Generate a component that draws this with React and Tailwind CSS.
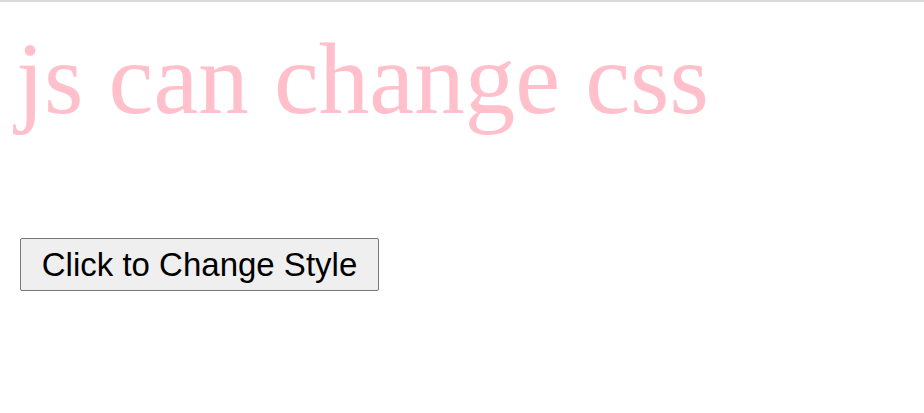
export default function App() {
  return (
    <div className="min-h-[413px] w-full bg-white">
      <div className="h-[2px] w-full bg-[#dadada]" />
      <div className="pl-[16px] pt-[20px]">
        <h1
          className="text-[101px] leading-[115px] text-[#ffc0cb] whitespace-nowrap"
          style={{ fontFamily: '"Liberation Serif", "Times New Roman", serif' }}
        >
          js can change css
        </h1>
      </div>
      <div className="pl-[20px] pt-[101px]">
        <button
          className="flex h-[53px] w-[359px] items-center justify-center rounded-[2px] border border-[#767676] bg-[#efefef] text-[33px] text-black"
          style={{ fontFamily: '"Liberation Sans", Arial, sans-serif' }}
        >
          Click to Change Style
        </button>
      </div>
    </div>
  );
}
